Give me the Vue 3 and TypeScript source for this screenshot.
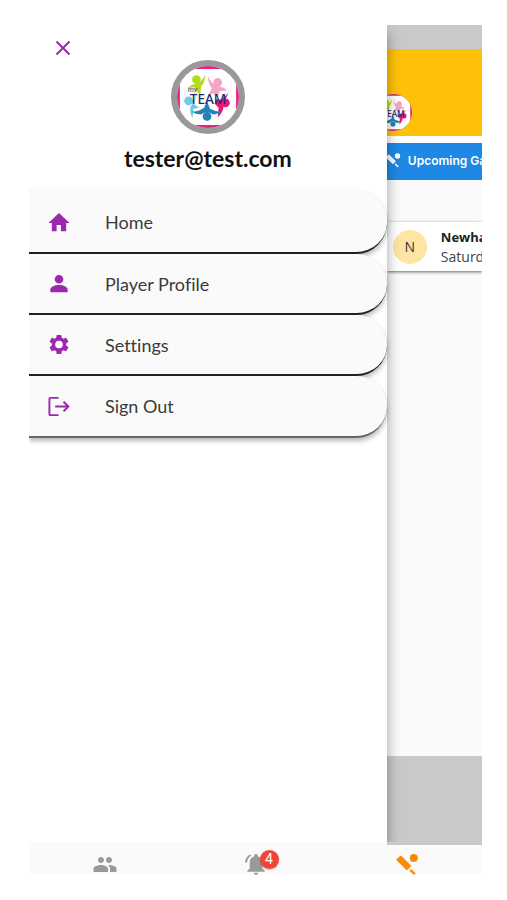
<script setup lang="ts">
interface MenuItem {
  label: string
  path: string
}

interface Figure {
  color: string
  cx: number
  cy: number
  body: string
}

const menu: MenuItem[] = [
  { label: 'Home', path: 'M9.500 21v-6.500h4.500V21h5.500v-8.500H23L12 2 1 12.500h3.500V21z' },
  {
    label: 'Player Profile',
    path: 'M12 3a4.500 4.500 0 1 1 0 9 4.500 4.500 0 0 1 0-9zM12 13.600c4.600 0 9 1.900 9 4.600v2.800H3v-2.800c0-2.700 4.400-4.600 9-4.600z',
  },
  {
    label: 'Settings',
    path: 'M12 16a4 4 0 1 1 0-8 4 4 0 0 1 0 8m7.430-3.030c.04-.32.07-.64.07-.97s-.03-.66-.07-1l2.110-1.630c.19-.15.24-.42.12-.64l-2-3.460c-.12-.22-.39-.31-.61-.22l-2.490 1c-.52-.39-1.060-.73-1.690-.98l-.37-2.650A.506.506 0 0 0 14 2h-4c-.25 0-.46.18-.5.42l-.37 2.650c-.63.25-1.170.59-1.690.98l-2.490-1c-.22-.09-.49 0-.61.22l-2 3.460c-.13.22-.07.49.12.64L4.570 11c-.04.34-.07.67-.07 1s.03.65.07.97l-2.110 1.660c-.19.15-.25.42-.12.64l2 3.460c.12.22.39.3.61.22l2.490-1.010c.52.4 1.060.74 1.690.99l.37 2.650c.04.24.25.42.5.42h4c.25 0 .46-.18.5-.42l.37-2.650c.63-.26 1.170-.59 1.690-.99l2.490 1.010c.22.08.49 0 .61-.22l2-3.460c.12-.22.07-.49-.12-.64z',
  },
  {
    label: 'Sign Out',
    path: 'M3 2h8.500v2H3v16h8.500v2H3a2 2 0 0 1-2-2V4a2 2 0 0 1 2-2zM17.500 6.300l5.700 5.700-5.700 5.700-1.500-1.500 3.200-3.200H8v-2h11.200L16 7.800z',
  },
]

const figures: Figure[] = [
  { color: '#b5dc1c', cx: 20, cy: 14, body: 'M29 9c0 5-1 9-4 12l-1 9c-3-3-5-5-6-8l-8 1 6-4c5 0 9-2 13-10z' },
  { color: '#f6a3c4', cx: 42, cy: 17, body: 'M32 10c2 6 5 8 8 10 5 1 9 2 12 5l-8 1-2 6-5-4-5 3 4-8c-3-4-4-8-4-13z' },
  { color: '#72cbe6', cx: 12, cy: 36, body: 'M20 27c0 5-1 8-3 12l6 4-6 1-1 10c-2-4-3-8-2-12 4-5 5-9 6-15z' },
  { color: '#e5177b', cx: 50, cy: 38, body: 'M53 27c-1 5-3 8-7 11l2 5c-1 4-3 7-6 10l1-10-4-4 1-5 4 1c4-2 7-4 9-8z' },
  { color: '#2583b8', cx: 31, cy: 52, body: 'M31 36l3 8c4 2 8 3 12 3-3 2-6 3-9 3-4-3-8-3-12 0-4 0-7-1-10-3 5 0 9-1 13-4z' },
]

const batPath =
  'M18.800 2a4 4 0 1 1 0 8 4 4 0 0 1 0-8zM6.500 4.100l9.200 9.100c.5.5.5 1 0 1.500l-3.100 3.100c-.5.5-1 .5-1.500 0L1.700 8.600c-.5-.5-.5-1 0-1.500l3.300-3c.5-.5 1-.5 1.500 0zM16 17l4.700 4.200-1.600 1.700-4.700-4.200z'
</script>

<template>
  <div class="phone">
    <div class="stage">
      <aside class="drawer">
        <button class="close" type="button" aria-label="Close">
          <svg viewBox="0 0 16 16"><path d="M1.500 1.500l13 13M14.500 1.500l-13 13" fill="none" stroke="currentColor" stroke-width="2" /></svg>
        </button>
        <div class="profile">
          <div class="avatar">
            <svg viewBox="0 0 64 64">
              <g id="team-logo">
                <rect width="64" height="64" fill="#e0267d" />
                <rect x="3" y="3" width="58" height="58" rx="1" fill="#fff" />
                <g v-for="f in figures" :key="f.color" :fill="f.color">
                  <circle :cx="f.cx" :cy="f.cy" r="4.500" />
                  <path :d="f.body" />
                </g>
                <text x="11" y="27" class="logo-my">my</text>
                <text x="32" y="39" class="logo-team">TEAM</text>
              </g>
            </svg>
          </div>
          <h1>tester@test.com</h1>
        </div>
        <nav class="menu">
          <a v-for="item in menu" :key="item.label" href="#" class="entry">
            <svg viewBox="0 0 24 24"><path :d="item.path" fill="currentColor" /></svg>
            <span>{{ item.label }}</span>
          </a>
        </nav>
      </aside>

      <main class="page">
        <div class="status"></div>
        <header class="hero">
          <svg class="crest" viewBox="0 0 64 64"><use href="#team-logo" /></svg>
        </header>
        <div class="tab">
          <svg viewBox="0 0 24 24"><path :d="batPath" fill="currentColor" /></svg>
          <span>Upcoming Ga</span>
        </div>
        <article class="game">
          <span class="initial">N</span>
          <div class="details">
            <strong>Newha</strong>
            <span>Saturd</span>
          </div>
        </article>
        <div class="foot"></div>
      </main>
    </div>

    <nav class="tabs">
      <button type="button" aria-label="Team">
        <svg viewBox="0 0 24 24"><path fill="currentColor" d="M16 11c1.660 0 2.990-1.340 2.990-3S17.660 5 16 5s-3 1.340-3 3 1.340 3 3 3zm-8 0c1.660 0 2.990-1.340 2.990-3S9.660 5 8 5 5 6.340 5 8s1.340 3 3 3zm0 2c-2.330 0-7.500 1.170-7.500 3.500V20h14.500v-3.500c0-2.330-4.670-3.500-7-3.500zm8 0c-.29 0-.62.02-.97.05 1.160.84 1.970 1.970 1.970 3.450V20h6.500v-3.500c0-2.330-5.170-3.500-7.500-3.500z" /></svg>
      </button>
      <button type="button" aria-label="Notifications">
        <span class="bell">
          <svg viewBox="0 0 24 24">
            <path fill="currentColor" d="M12 2c1 0 1.700.7 1.700 1.700v.5c3 .8 4.600 3.300 4.600 6.300v6l2.400 2.300v1H3.300v-1l2.400-2.300v-6c0-3 1.600-5.500 4.600-6.300v-.5C10.300 2.700 11 2 12 2zM9.900 20.800h4.200a2.100 2.100 0 0 1-4.200 0z" />
            <path fill="none" stroke="currentColor" stroke-width="2" d="M6.500 3C4 4.700 2.300 7 2 10.500" />
          </svg>
          <span class="badge">4</span>
        </span>
      </button>
      <button type="button" class="active" aria-label="Games">
        <svg viewBox="0 0 24 24"><path :d="batPath" fill="currentColor" /></svg>
      </button>
    </nav>
  </div>
</template>

<style>
body {
  background: #fff;
}
</style>

<style scoped>
.phone {
  box-sizing: border-box;
  display: flex;
  flex-direction: column;
  min-height: calc(100vh - 51px);
  margin: 25px 25px 26px 29px;
  font-family: Lato, sans-serif;
  background: #fafafa;
}
.logo-my {
  font: italic 400 8px Lato, sans-serif;
  fill: #28366f;
}
.logo-team {
  font: 500 14px "Noto Sans", sans-serif;
  text-anchor: middle;
  fill: #202e68;
}
.stage {
  display: flex;
  flex: 1;
}
.drawer {
  z-index: 1;
  flex: 0 0 79%;
  box-sizing: border-box;
  background: #fff;
  box-shadow: 1px 8px 12px rgba(0, 0, 0, 0.32);
  clip-path: inset(0 -20px 0 0);
}
.close {
  display: block;
  width: 16px;
  height: 16px;
  margin: 15px 0 0 26px;
  padding: 0;
  border: 0;
  background: none;
  color: #9c27b0;
}
.close svg {
  display: block;
  width: 16px;
  height: 16px;
}
.profile {
  display: flex;
  flex-direction: column;
  align-items: center;
  gap: 10px;
  margin-top: 4px;
}
.avatar {
  box-sizing: border-box;
  width: 74px;
  height: 74px;
  border: 6px solid #999;
  border-radius: 50%;
  overflow: hidden;
}
.avatar svg {
  display: block;
  width: 62px;
  height: 62px;
}
h1 {
  margin: 0;
  font-size: 23px;
  line-height: 28px;
  font-weight: 700;
  color: #111;
}
.menu {
  display: flex;
  flex-direction: column;
  margin-top: 18px;
}
.entry {
  display: flex;
  align-items: center;
  gap: 34px;
  box-sizing: border-box;
  height: 61px;
  padding-left: 18px;
  border-bottom: 2px solid #222;
  border-radius: 0 31px 31px 0;
  background: #fafafa;
  box-shadow: 0 3px 5px rgba(0, 0, 0, 0.28);
  color: #3a3a3a;
  font-size: 18px;
  font-variant-ligatures: none;
  text-decoration: none;
}
.entry:first-child {
  height: 64px;
  padding-top: 2px;
}
.entry:last-child {
  height: 62px;
  border-bottom-color: #666;
}
.entry svg {
  width: 24px;
  height: 23px;
  color: #9c27b0;
}
.page {
  display: flex;
  flex: 1;
  flex-direction: column;
  min-width: 0;
  margin-bottom: -3px;
  overflow: hidden;
  white-space: nowrap;
}
.status {
  height: 24px;
  background: #c9c9c9;
}
.hero {
  display: flex;
  align-items: flex-end;
  box-sizing: border-box;
  height: 87px;
  padding-bottom: 5px;
  background: #ffc107;
}
.crest {
  width: 37px;
  height: 37px;
  margin-left: -12px;
  border-radius: 50%;
}
.tab {
  display: flex;
  align-items: center;
  gap: 7px;
  box-sizing: border-box;
  height: 44px;
  padding-bottom: 3px;
  border-top: 7px solid #fff;
  background: #1e88e5;
  color: #fff;
  font: 600 12px Inter, sans-serif;
}
.tab svg {
  flex: none;
  width: 16px;
  height: 16px;
  margin-left: -2px;
}
.game {
  display: flex;
  align-items: center;
  gap: 14px;
  height: 49px;
  margin-top: 42px;
  padding-left: 6px;
  background: #fff;
  box-shadow: 0 1px 3px rgba(0, 0, 0, 0.6);
  font-family: "Open Sans", sans-serif;
  font-size: 14px;
  line-height: 19px;
  color: #444;
}
.initial {
  display: grid;
  flex: none;
  place-items: center;
  width: 34px;
  height: 34px;
  border-radius: 50%;
  background: #ffe5a3;
  color: #333;
}
.details {
  display: flex;
  flex-direction: column;
}
.details strong {
  font-size: 13px;
  color: #222;
}
.foot {
  height: 89px;
  margin-top: auto;
  background: #c9c9c9;
}
.tabs {
  display: grid;
  grid-template-columns: repeat(3, 1fr);
  height: 32px;
}
.tabs button {
  display: flex;
  justify-content: center;
  align-items: flex-start;
  padding: 10px 0 0;
  border: 0;
  background: none;
  color: #999;
}
.tabs svg {
  display: block;
  width: 24px;
  height: 24px;
}
.tabs .active {
  color: #fb8c00;
}
.bell {
  position: relative;
}
.badge {
  position: absolute;
  top: -2px;
  left: 16px;
  width: 19px;
  border-radius: 50%;
  background: #f44336;
  color: #fff;
  font: 14px/19px Roboto, sans-serif;
  text-align: center;
  box-shadow: 0 1px 2px rgba(0, 0, 0, 0.25);
}
</style>
